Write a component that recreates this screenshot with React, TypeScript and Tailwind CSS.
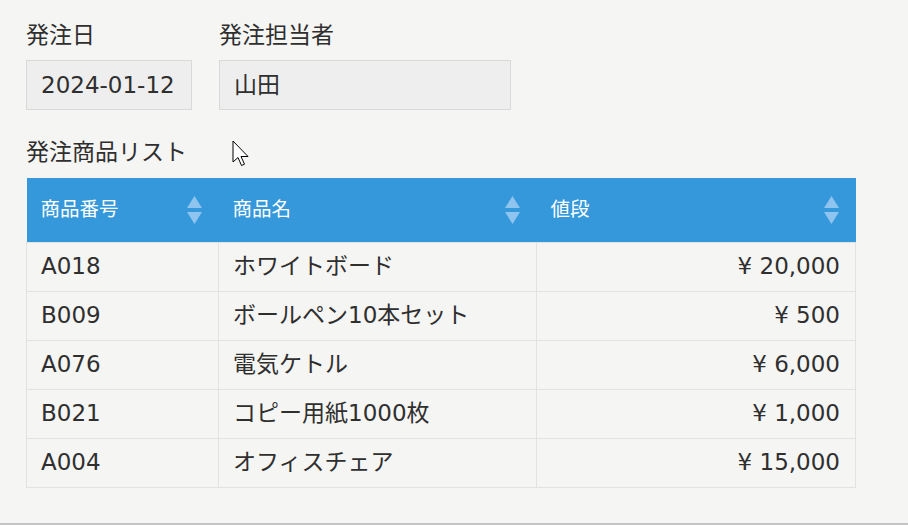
import React from 'react';

const rows = [
  { code: 'A018', name: 'ホワイトボード', price: '¥ 20,000' },
  { code: 'B009', name: 'ボールペン10本セット', price: '¥ 500' },
  { code: 'A076', name: '電気ケトル', price: '¥ 6,000' },
  { code: 'B021', name: 'コピー用紙1000枚', price: '¥ 1,000' },
  { code: 'A004', name: 'オフィスチェア', price: '¥ 15,000' },
];

const SortIcon = () => (
  <svg width="15" height="28" viewBox="0 0 15 28" className="shrink-0">
    <path d="M7.5 0 L15 12 L0 12 Z" fill="#8ec4ee" />
    <path d="M0 16 L15 16 L7.5 28 Z" fill="#8ec4ee" />
  </svg>
);

const HeaderCell = (props: { label: string; width: string }) => (
  <th className={`${props.width} h-[64px] p-0 text-left font-normal`}>
    <div className="flex items-center justify-between pl-[14px] pr-[17px]">
      <span className="text-[19.5px] text-white">{props.label}</span>
      <SortIcon />
    </div>
  </th>
);

export default function App() {
  return (
    <div
      className="relative h-[525px] w-[908px] overflow-hidden border-b-2 border-[#c4c4c4] bg-[#f5f5f3] text-[#2f2f2f]"
      style={{ fontFamily: '"DejaVu Sans", "Noto Sans CJK JP", sans-serif' }}
    >
      <div className="px-[26px] pt-[20px]">
        <div className="flex gap-[27px]">
          <div className="flex flex-col gap-[10px]">
            <div className="h-[30px] text-[23px] leading-[30px]">発注日</div>
            <div className="flex h-[50px] w-[166px] items-center border border-[#d9d9d9] bg-[#eeeeee] pl-[14px] text-[23px]">
              2024-01-12
            </div>
          </div>
          <div className="flex flex-col gap-[10px]">
            <div className="h-[30px] text-[23px] leading-[30px]">発注担当者</div>
            <div className="flex h-[50px] w-[292px] items-center border border-[#d9d9d9] bg-[#eeeeee] pl-[14px] text-[23px]">
              山田
            </div>
          </div>
        </div>

        <div className="mt-[27px] h-[30px] text-[23px] leading-[30px]">発注商品リスト</div>

        <table className="mt-[11px] w-[829px] table-fixed border-collapse">
          <thead>
            <tr className="bg-[#3498db]">
              <HeaderCell label="商品番号" width="w-[192px]" />
              <HeaderCell label="商品名" width="w-[318px]" />
              <HeaderCell label="値段" width="w-[319px]" />
            </tr>
          </thead>
          <tbody>
            {rows.map((r) => (
              <tr key={r.code} className="h-[49px] text-[23px]">
                <td className="border border-[#e2e2e2] px-[14px]">{r.code}</td>
                <td className="border border-[#e2e2e2] px-[14px]">{r.name}</td>
                <td className="border border-[#e2e2e2] px-[15px] text-right">{r.price}</td>
              </tr>
            ))}
          </tbody>
        </table>
      </div>

      <svg
        className="absolute left-[232px] top-[140px]"
        width="20"
        height="28"
        viewBox="0 0 20 28"
      >
        <path
          d="M1 1 L1 22 L6 17.5 L9.5 25.5 L12.5 24.2 L9 16.5 L16 16.5 Z"
          fill="#ffffff"
          stroke="#000000"
          strokeWidth="1"
          strokeLinejoin="miter"
        />
      </svg>
    </div>
  );
}
